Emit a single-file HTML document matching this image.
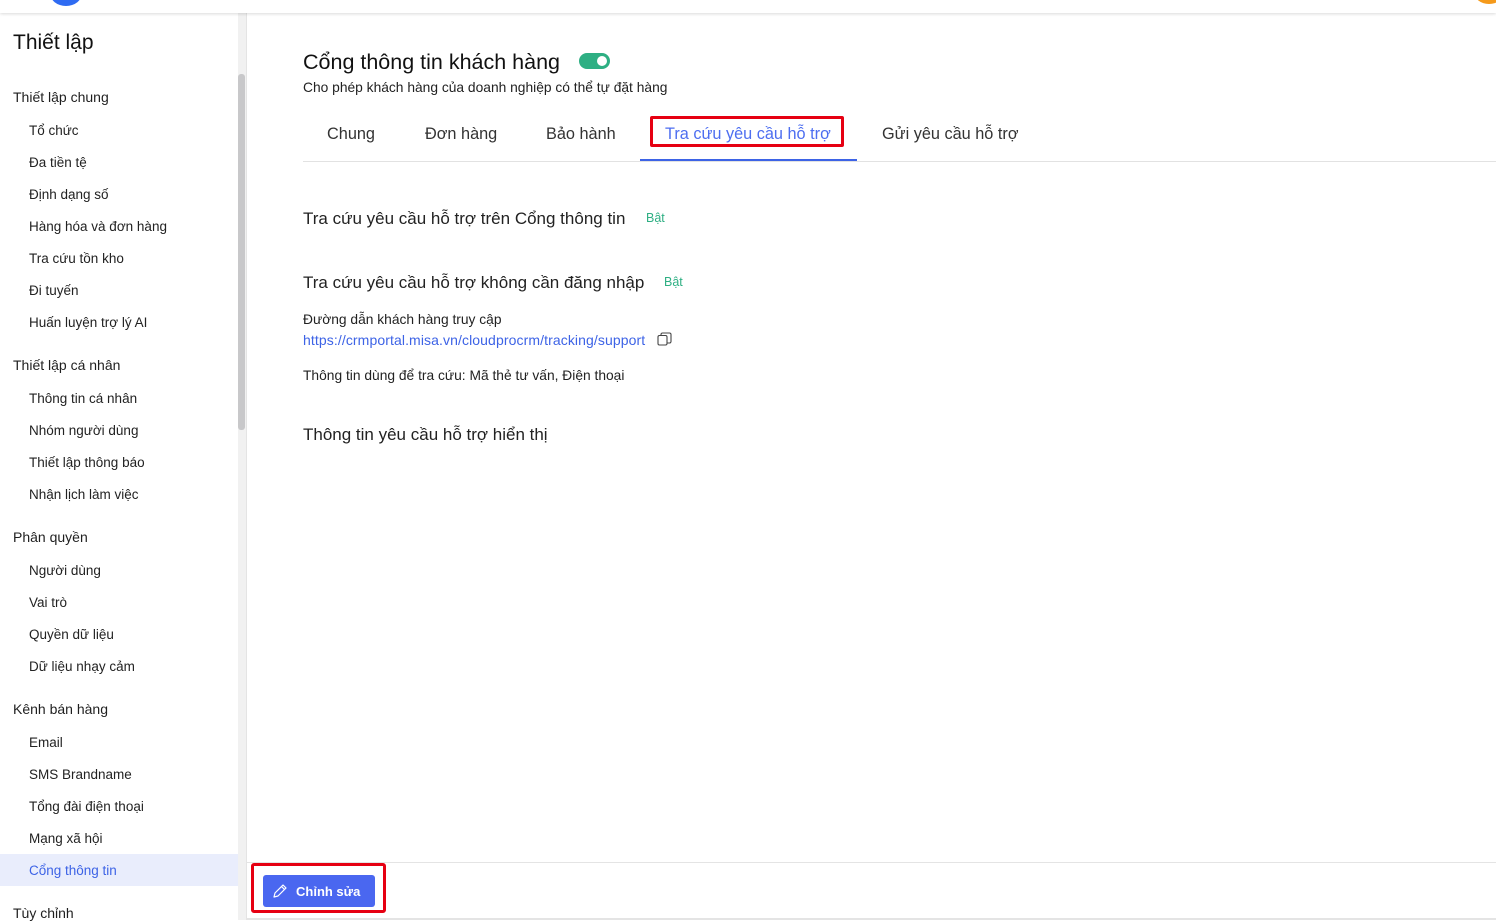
<!DOCTYPE html>
<html><head><meta charset="utf-8"><style>
*{margin:0;padding:0;box-sizing:border-box}
body{width:1496px;height:920px;overflow:hidden;background:#fff;font-family:"Liberation Sans",sans-serif;color:#1f1f1f;position:relative}
.top{position:absolute;left:0;top:0;width:1496px;height:13px;background:#fff;box-shadow:0 1px 3px rgba(0,0,0,.15);z-index:2;overflow:hidden}
.side{position:absolute;left:0;top:13px;width:247px;height:907px;border-right:1px solid #e4e4e4;background:#fff}
.a{position:absolute;white-space:nowrap}
.sb{position:absolute;left:238px;top:74px;width:7px;height:356px;background:#c8c8ca;border-radius:3px}
.sbt{position:absolute;left:238px;top:13px;width:8px;height:907px;background:#f1f1f1}
.g{font-size:14px;left:13px}
.i{font-size:13.5px;left:29px;color:#222}
.tab{position:absolute;top:125px;font-size:16.3px;color:#333}
</style></head><body>
<div class="top"><div style="position:absolute;left:50px;top:-20px;width:32px;height:26px;border-radius:50%;background:#2f6bf2"></div><div style="position:absolute;left:1474px;top:-20px;width:30px;height:24px;border-radius:50%;background:#f59a1b"></div></div>
<div class="side"></div>
<div class="sbt"></div><div class="sb"></div>
<div class="a" style="left:13px;top:31px;font-size:21px;color:#111">Thiết lập</div>
<div class="a g" style="top:89px">Thiết lập chung</div>
<div class="a i" style="top:123px">Tổ chức</div>
<div class="a i" style="top:155px">Đa tiền tệ</div>
<div class="a i" style="top:187px">Định dạng số</div>
<div class="a i" style="top:219px">Hàng hóa và đơn hàng</div>
<div class="a i" style="top:251px">Tra cứu tồn kho</div>
<div class="a i" style="top:283px">Đi tuyến</div>
<div class="a i" style="top:315px">Huấn luyện trợ lý AI</div>
<div class="a g" style="top:357px">Thiết lập cá nhân</div>
<div class="a i" style="top:391px">Thông tin cá nhân</div>
<div class="a i" style="top:423px">Nhóm người dùng</div>
<div class="a i" style="top:455px">Thiết lập thông báo</div>
<div class="a i" style="top:487px">Nhận lịch làm việc</div>
<div class="a g" style="top:529px">Phân quyền</div>
<div class="a i" style="top:563px">Người dùng</div>
<div class="a i" style="top:595px">Vai trò</div>
<div class="a i" style="top:627px">Quyền dữ liệu</div>
<div class="a i" style="top:659px">Dữ liệu nhạy cảm</div>
<div class="a g" style="top:701px">Kênh bán hàng</div>
<div class="a i" style="top:735px">Email</div>
<div class="a i" style="top:767px">SMS Brandname</div>
<div class="a i" style="top:799px">Tổng đài điện thoại</div>
<div class="a i" style="top:831px">Mạng xã hội</div>
<div style="position:absolute;left:0;top:854px;width:238px;height:32px;background:#e9edfc"></div>
<div class="a i" style="top:863px;color:#3d63e6">Cổng thông tin</div>
<div class="a g" style="top:905px">Tùy chỉnh</div>

<div class="a" style="left:303px;top:50px;font-size:21.5px;color:#111">Cổng thông tin khách hàng</div>
<div style="position:absolute;left:579px;top:53px;width:31px;height:16px;border-radius:8px;background:#2eaf83"><div style="position:absolute;right:3px;top:3px;width:10px;height:10px;border-radius:50%;background:#fff"></div></div>
<div class="a" style="left:303px;top:80px;font-size:13.8px;color:#222">Cho phép khách hàng của doanh nghiệp có thể tự đặt hàng</div>
<div class="tab" style="left:327px">Chung</div>
<div class="tab" style="left:425px">Đơn hàng</div>
<div class="tab" style="left:546px">Bảo hành</div>
<div class="tab" style="left:665px;color:#4d6ef0">Tra cứu yêu cầu hỗ trợ</div>
<div class="tab" style="left:882px">Gửi yêu cầu hỗ trợ</div>
<div style="position:absolute;left:650px;top:116px;width:194px;height:31px;border:3px solid #e60012;border-radius:2px"></div>
<div style="position:absolute;left:303px;top:161px;width:1193px;height:1px;background:#e2e2e2"></div>
<div style="position:absolute;left:640px;top:159px;width:217px;height:2px;background:#3d63e6"></div>

<div class="a" style="left:303px;top:209px;font-size:17px;color:#222">Tra cứu yêu cầu hỗ trợ trên Cổng thông tin</div>
<div class="a" style="left:646px;top:211px;font-size:12.5px;color:#2eaf83">Bật</div>
<div class="a" style="left:303px;top:273px;font-size:17px;color:#222">Tra cứu yêu cầu hỗ trợ không cần đăng nhập</div>
<div class="a" style="left:664px;top:275px;font-size:12.5px;color:#2eaf83">Bật</div>
<div class="a" style="left:303px;top:312px;font-size:13.8px;color:#222">Đường dẫn khách hàng truy cập</div>
<div class="a" style="left:303px;top:332px;font-size:14px;color:#3d63e6;letter-spacing:0.1px">https://crmportal.misa.vn/cloudprocrm/tracking/support</div>
<svg style="position:absolute;left:657px;top:332px" width="15" height="14" viewBox="0 0 15 14" fill="none" stroke="#444" stroke-width="1.1"><rect x="1" y="3.5" width="9" height="9.5" rx="1.5"/><path d="M4 3.5V2.5A1.5 1.5 0 0 1 5.5 1h7A1.5 1.5 0 0 1 14 2.5v7A1.5 1.5 0 0 1 12.5 11H10"/></svg>
<div class="a" style="left:303px;top:368px;font-size:13.8px;color:#222">Thông tin dùng để tra cứu: Mã thẻ tư vấn, Điện thoại</div>
<div class="a" style="left:303px;top:425px;font-size:17px;color:#222">Thông tin yêu cầu hỗ trợ hiển thị</div>

<div style="position:absolute;left:247px;top:862px;width:1249px;height:1px;background:#e4e4e4"></div>
<div style="position:absolute;left:247px;top:918px;width:1249px;height:2px;background:#e4e4e4"></div>
<div style="position:absolute;left:251px;top:863px;width:135px;height:50px;border:3px solid #e60012;border-radius:3px"></div>
<div style="position:absolute;left:263px;top:875px;width:112px;height:32px;background:#4a67f0;border-radius:3px"></div>
<svg style="position:absolute;left:272px;top:883px" width="16" height="16" viewBox="0 0 16 16" fill="none" stroke="#fff" stroke-width="1.2" stroke-linejoin="round"><path d="M2 14l1-4 8-8 3 3-8 8z M9.5 3.5l3 3"/></svg>
<div class="a" style="left:296px;top:884px;font-size:13px;color:#fff;font-weight:bold">Chỉnh sửa</div>
</body></html>
